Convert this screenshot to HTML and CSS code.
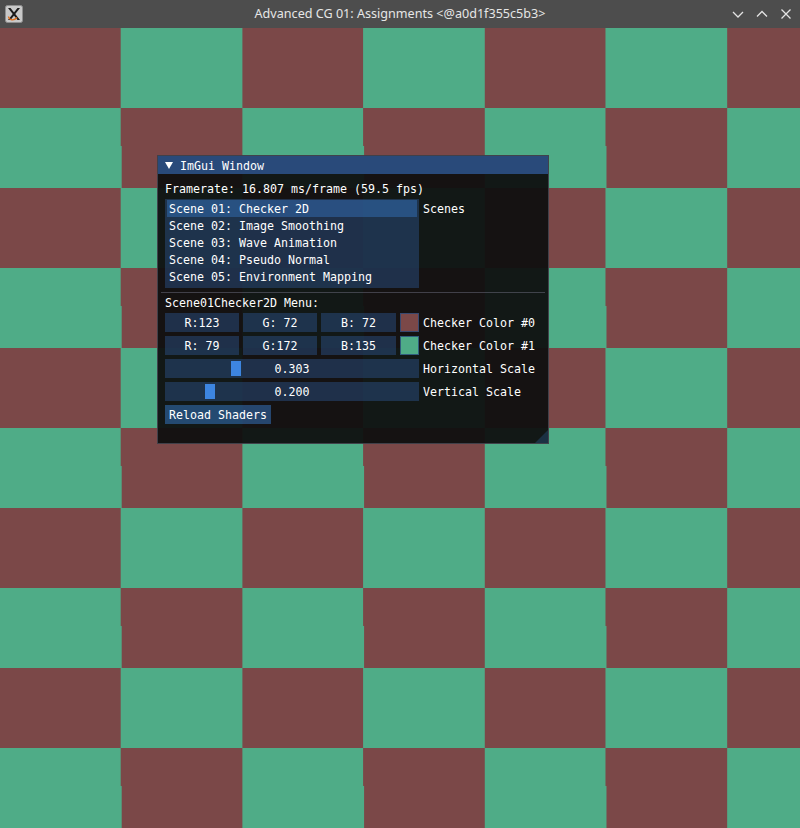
FILE: index.html
```html
<!DOCTYPE html>
<html>
<head>
<meta charset="utf-8">
<title>Advanced CG 01: Assignments</title>
<link rel="stylesheet" href="styles.css">
</head>
<body>
<div class="app">
  <header class="titlebar">
    <div class="app-icon">
      <svg width="18" height="18" viewBox="0 0 18 18">
        <rect x="0.5" y="0.5" width="17" height="17" rx="2" fill="#c9c9c9" stroke="#8f8f8f"/>
        <polygon points="3,3 5.5,3 15,15 12.5,15" fill="#1a1a1a"/>
        <polygon points="12.5,3 15,3 5.5,15 3,15" fill="#1a1a1a"/>
        <path d="M3.5 11.5 C4 15.5 9 16 12 12.5" fill="none" stroke="#e0701e" stroke-width="1.4"/>
      </svg>
    </div>
    <div class="win-title">Advanced CG 01: Assignments &lt;@a0d1f355c5b3&gt;</div>
    <div class="win-controls">
      <svg width="14" height="14" viewBox="0 0 14 14"><polyline points="2,5 7,10 12,5" fill="none" stroke="#e3e3e3" stroke-width="1.3"/></svg>
      <svg width="14" height="14" viewBox="0 0 14 14"><polyline points="2,9.5 7,4.5 12,9.5" fill="none" stroke="#e3e3e3" stroke-width="1.3"/></svg>
      <svg width="14" height="14" viewBox="0 0 14 14"><path d="M2.5 2.5 L11.5 11.5 M11.5 2.5 L2.5 11.5" fill="none" stroke="#e3e3e3" stroke-width="1.3"/></svg>
    </div>
  </header>
  <main class="viewport">
    <section class="ig-window">
      <div class="ig-title"><span class="ig-arrow"></span><span class="ig-title-text">ImGui Window</span></div>
      <div class="ig-body">
        <div class="ig-text">Framerate: 16.807 ms/frame (59.5 fps)</div>
        <div class="ig-row">
          <div class="listbox">
            <div class="ig-item selected">Scene 01: Checker 2D</div>
            <div class="ig-item">Scene 02: Image Smoothing</div>
            <div class="ig-item">Scene 03: Wave Animation</div>
            <div class="ig-item">Scene 04: Pseudo Normal</div>
            <div class="ig-item">Scene 05: Environment Mapping</div>
          </div>
          <span class="ig-label">Scenes</span>
        </div>
        <div class="ig-sep"></div>
        <div class="ig-text">Scene01Checker2D Menu:</div>
        <div class="ig-row">
          <div class="frame w74">R:123</div>
          <div class="frame w74">G: 72</div>
          <div class="frame w75">B: 72</div>
          <div class="swatch maroon"></div>
          <span class="ig-label">Checker Color #0</span>
        </div>
        <div class="ig-row">
          <div class="frame w74">R: 79</div>
          <div class="frame w74">G:172</div>
          <div class="frame w75">B:135</div>
          <div class="swatch green"></div>
          <span class="ig-label">Checker Color #1</span>
        </div>
        <div class="ig-row">
          <div class="frame slider"><span class="grab" style="left:66px"></span><span class="val">0.303</span></div>
          <span class="ig-label">Horizontal Scale</span>
        </div>
        <div class="ig-row">
          <div class="frame slider"><span class="grab" style="left:40px"></span><span class="val">0.200</span></div>
          <span class="ig-label">Vertical Scale</span>
        </div>
        <div class="ig-row">
          <button class="ig-button">Reload Shaders</button>
        </div>
      </div>
      <div class="grip"></div>
    </section>
  </main>
</div>
</body>
</html>
```
FILE: styles.css
```css
* { box-sizing: border-box; }
html, body { margin: 0; padding: 0; }
body { background: #4d4d4d; width: 800px; height: 828px; overflow: hidden; }
.app { display: flex; flex-direction: column; width: 800px; }

.titlebar {
  height: 28px;
  background: #4d4d4d;
  display: flex;
  align-items: center;
  position: relative;
  font-family: "Noto Sans", "Open Sans", sans-serif;
  color: #e6e6e6;
}
.app-icon { width: 18px; height: 18px; margin-left: 5px; display: flex; }
.win-title {
  flex: 1;
  text-align: center;
  font-size: 12.6px;
  line-height: 28px;
  margin-left: -23px;
  margin-right: -69px;
}
.win-controls { display: flex; gap: 10px; margin-right: 7px; }
.win-controls svg { display: block; }

.viewport {
  height: 800px;
  position: relative;
  background-image: conic-gradient(#4fac87 0 25%, #7b4848 0 50%, #4fac87 0 75%, #7b4848 0);
  background-size: 242.4px 160px;
  background-position: 0 0;
}

.ig-window {
  position: absolute;
  left: 157px;
  top: 127px;
  width: 392px;
  height: 289px;
  background: rgba(15, 15, 15, 0.94);
  border: 1px solid rgba(110, 110, 128, 0.5);
  font-family: "DejaVu Sans Mono", "Liberation Mono", monospace;
  font-size: 11.63px;
  line-height: 13px;
  color: #ffffff;
  display: flex;
  flex-direction: column;
}
.ig-title {
  height: 18px;
  background: #294a7a;
  display: flex;
  align-items: center;
  padding-left: 7px;
}
.ig-arrow {
  width: 0; height: 0;
  border-left: 4px solid transparent;
  border-right: 4px solid transparent;
  border-top: 7px solid #ffffff;
  margin-right: 7px;
  margin-top: 1px;
}
.ig-title-text { line-height: 20px; height: 18px; }

.ig-body {
  display: flex;
  flex-direction: column;
  gap: 4px;
  padding: 8px 7px 0 7px;
}
.ig-text { height: 13px; line-height: 15px; white-space: pre; }
.ig-row { display: flex; gap: 4px; align-items: flex-start; }
.ig-label { height: 19px; line-height: 21px; white-space: pre; }

.listbox {
  width: 254px;
  height: 89px;
  background: rgba(41, 74, 122, 0.54);
  padding: 1px 2px 0 2px;
  display: flex;
  flex-direction: column;
}
.ig-item {
  height: 17px;
  line-height: 19px;
  padding-left: 2px;
  white-space: pre;
}
.ig-item.selected { background: rgba(66, 150, 250, 0.31); }

.ig-sep {
  height: 1px;
  margin: 0 -4px -1px -4px;
  background: rgba(110, 110, 128, 0.5);
}

.frame {
  height: 19px;
  line-height: 21px;
  background: rgba(41, 74, 122, 0.54);
  text-align: center;
  white-space: pre;
  position: relative;
}
.w74 { width: 74px; }
.w75 { width: 75px; }
.swatch {
  width: 19px;
  height: 19px;
  border: 1px solid rgba(41, 74, 122, 0.8);
}
.swatch.maroon { background: #7b4848; }
.swatch.green { background: #4fac87; }

.slider { width: 254px; }
.slider .val { position: relative; }
.grab {
  position: absolute;
  top: 2px;
  width: 10px;
  height: 15px;
  background: #3d85e0;
}

.ig-button {
  height: 19px;
  padding: 0 4px;
  border: none;
  margin: 0;
  background: rgba(66, 150, 250, 0.4);
  color: #ffffff;
  font: inherit;
  line-height: 21px;
  white-space: pre;
}

.grip {
  position: absolute;
  right: 0;
  bottom: 0;
  width: 13px;
  height: 13px;
  background: rgba(66, 150, 250, 0.2);
  clip-path: polygon(100% 0, 100% 100%, 0 100%);
}
```
